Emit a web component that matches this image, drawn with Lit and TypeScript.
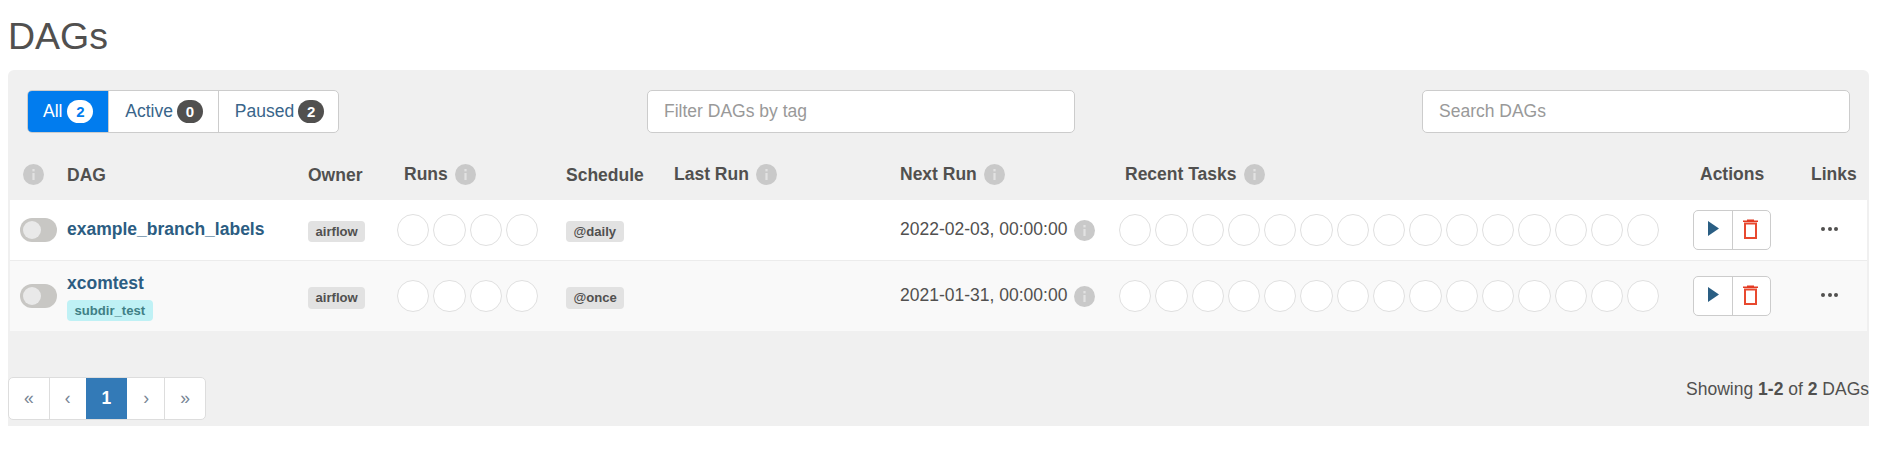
import { LitElement, html, css, svg } from "lit";
import { customElement } from "lit/decorators.js";

const info = html`<svg class="info" viewBox="0 0 21 21" aria-hidden="true">
  <circle cx="10.5" cy="10.5" r="10.5" fill="#c9c9c9"></circle>
  <rect x="9.4" y="5" width="2.2" height="2.4" fill="#e2e2e2"></rect>
  <rect x="9.4" y="9" width="2.2" height="7" fill="#e2e2e2"></rect>
</svg>`;

const play = html`<svg class="ico" width="13" height="17" viewBox="0 0 13 17" aria-hidden="true">
  <path d="M1 1 L12 8.5 L1 16 Z" fill="#2a5e83"></path>
</svg>`;

const trash = html`<svg class="ico" width="15" height="20" viewBox="0 0 15 20" aria-hidden="true">
  ${svg`<path d="M4 0.5 H11 V1.5 H15 V3 H0 V1.5 H4 Z" fill="#e43921"></path>
  <rect x="2" y="4.5" width="11" height="14.5" fill="none" stroke="#e8492f" stroke-width="2"></rect>`}
</svg>`;

const dags = [
  { name: "example_branch_labels", tag: "", owner: "airflow", schedule: "@daily", next: "2022-02-03, 00:00:00" },
  { name: "xcomtest", tag: "subdir_test", owner: "airflow", schedule: "@once", next: "2021-01-31, 00:00:00" },
];

@customElement("app-root")
export class AppRoot extends LitElement {
  static styles = css`
    :host {
      display: block;
      font-family: "Liberation Sans", Arial, sans-serif;
      font-size: 17.5px;
      line-height: 25px;
      color: #51504f;
      background: #fff;
    }
    * { box-sizing: border-box; }
    .page { padding: 0 13px 49px 8px; }
    h1 {
      margin: 0;
      height: 70px;
      padding-top: 16px;
      font-size: 37.5px;
      line-height: 41px;
      font-weight: 400;
    }
    .panel {
      background: #f0f0f0;
      border-radius: 6px 6px 0 0;
      padding-top: 20px;
      padding-bottom: 6px;
    }
    .filters {
      display: flex;
      height: 43px;
      padding: 0 19px 0 19px;
    }
    .group {
      display: flex;
      background: #fff;
      border: 1px solid #ccc;
      border-radius: 5px;
      overflow: hidden;
      width: 312px;
    }
    .tab {
      display: block;
      padding: 8px 15px 8px 16px;
      color: #39658a;
      white-space: nowrap;
      border-left: 1px solid #ccc;
    }
    .tab .badge { margin-left: -1px; }
    .tab:first-child { border-left: 0; background: #017cee; color: #fff; margin: -1px 0 -1px -1px; padding: 9px 15px 9px 16px; }
    .tab:first-child .badge { margin-left: 0; background: #fff; color: #017cee; }
    .badge {
      display: inline-block;
      min-width: 26px;
      height: 23px;
      padding: 0 8px;
      border-radius: 12px;
      background: #51504f;
      color: #fff;
      font-size: 15px;
      line-height: 23px;
      font-weight: 700;
      text-align: center;
    }
    .field {
      height: 43px;
      border: 1px solid #ccc;
      border-radius: 5px;
      background: #fff;
      padding: 8px 16px;
      color: #999;
      font: inherit;
      outline: none;
    }
    .field::placeholder { color: #999; opacity: 1; }
    .tagfield { width: 428px; margin-left: 308px; }
    .searchfield { width: 428px; margin-left: auto; }
    .table { margin: 0 2px; }
    .cols {
      display: grid;
      grid-template-columns: 57px 241px 96px 162px 108px 226px 225px 568px 118px 56px;
      align-items: center;
    }
    .head {
      height: 67px;
      padding: 31px 0 15px;
      font-weight: 700;
    }
    .hcell { display: flex; align-items: center; gap: 7px; white-space: nowrap; height: 21px; }
    .hcell.first { padding-left: 13px; }
    .hcell.low { padding-top: 1px; }
    .hcell.act { padding-left: 7px; }
    .info { width: 21px; height: 21px; display: block; flex: none; }
    .row { background: #fff; border-bottom: 1px solid #ececec; padding: 10px 0; }
    .row.alt { background: #f9f9f9; border-bottom: 0; }
    .toggle {
      width: 37px;
      height: 24px;
      margin-left: 10px;
      border-radius: 12px;
      background: #c8c7c4;
      padding: 3px;
    }
    .knob { width: 18px; height: 18px; border-radius: 50%; background: #e9e9e9; }
    .name { color: #2c5d82; font-weight: 700; display: block; padding-bottom: 2px; }
    .chip {
      display: inline-block;
      padding: 0 7.5px;
      height: 21px;
      line-height: 21px;
      font-size: 13.125px;
      font-weight: 700;
      border-radius: 4px;
      background: #e2e2e2;
      color: #51504f;
      white-space: nowrap;
    }
    .alt .chip { height: 22px; line-height: 22px; }
    .alt .chip.tag { height: 21px; line-height: 21px; }
    .chip.tag { background: #bff1f5; color: #3f7f85; margin-top: 2px; display: block; width: fit-content; }
    .dots { display: flex; gap: 4px; }
    .dots.shift { margin-left: -7px; }
    .dots.shift2 { margin-left: -6px; }
    .dot {
      width: 32.3px;
      height: 32.3px;
      border-radius: 50%;
      background: #fff;
      border: 1.8px solid #e0e0e0;
      flex: none;
    }
    .next { display: flex; align-items: center; gap: 7px; white-space: nowrap; }
    .next span { padding-bottom: 2px; }
    .btns {
      display: flex;
      width: 78px;
      height: 40px;
      background: #fff;
      border: 1px solid #ccc;
      border-radius: 5px;
    }
    .btn { flex: 1; display: flex; align-items: center; justify-content: center; }
    .btn + .btn { border-left: 1px solid #ccc; }
    .ico { display: block; }
    .btn.p .ico { margin-top: -3px; margin-left: 2px; }
    .btn.t .ico { margin-top: -3px; margin-right: 1px; }
    .more { display: flex; gap: 2.5px; margin-left: 10px; width: fit-content; margin-top: -3px; }
    .more i { display: block; width: 4px; height: 4px; border-radius: 50%; background: #51504f; }
    .foot {
      display: flex;
      justify-content: space-between;
      align-items: flex-start;
      margin-top: 46px;
    }
    .pager {
      display: flex;
      height: 43px;
      background: #fff;
      border: 1px solid #ddd;
      border-radius: 5px;
      overflow: hidden;
    }
    .pager span {
      display: block;
      padding: 8px 15px;
      color: #778594;
      border-left: 1px solid #ddd;
    }
    .pager span:first-child { border-left: 0; }
    .pager .on { background: #337ab7; color: #fff; font-weight: 700; border-left: 0; margin: -1px 0; padding: 9px 16px; }
    .pager .on + span { border-left: 0; padding-left: 16px; }
    b { font-weight: 700; }
  `;

  render() {
    return html`<div class="page">
      <h1>DAGs</h1>
      <section class="panel">
        <div class="filters">
          <div class="group">
            <span class="tab">All <span class="badge">2</span></span>
            <span class="tab">Active <span class="badge">0</span></span>
            <span class="tab">Paused <span class="badge">2</span></span>
          </div>
          <input class="field tagfield" placeholder="Filter DAGs by tag" />
          <input class="field searchfield" placeholder="Search DAGs" />
        </div>
        <div class="table">
          <div class="cols head">
            <div class="hcell first">${info}</div>
            <div class="hcell low">DAG</div>
            <div class="hcell low">Owner</div>
            <div class="hcell">Runs ${info}</div>
            <div class="hcell low">Schedule</div>
            <div class="hcell">Last Run ${info}</div>
            <div class="hcell">Next Run ${info}</div>
            <div class="hcell">Recent Tasks ${info}</div>
            <div class="hcell act">Actions</div>
            <div class="hcell">Links</div>
          </div>
          ${dags.map(
            (d, i) => html`<div class="cols row ${i ? "alt" : ""}">
              <div class="toggle"><div class="knob"></div></div>
              <div>
                <span class="name">${d.name}</span>
                ${d.tag ? html`<span class="chip tag">${d.tag}</span>` : ""}
              </div>
              <div><span class="chip">${d.owner}</span></div>
              <div class="dots shift">${[0, 1, 2, 3].map(() => html`<div class="dot"></div>`)}</div>
              <div><span class="chip">${d.schedule}</span></div>
              <div></div>
              <div class="next"><span>${d.next}</span> ${info}</div>
              <div class="dots shift2">${Array.from({ length: 15 }).map(() => html`<div class="dot"></div>`)}</div>
              <div class="btns"><div class="btn p">${play}</div><div class="btn t">${trash}</div></div>
              <div class="more"><i></i><i></i><i></i></div>
            </div>`
          )}
        </div>
        <div class="foot">
          <div class="pager">
            <span>«</span><span>‹</span><span class="on">1</span><span>›</span><span>»</span>
          </div>
          <div>Showing <b>1-2</b> of <b>2</b> DAGs</div>
        </div>
      </section>
    </div>`;
  }
}
